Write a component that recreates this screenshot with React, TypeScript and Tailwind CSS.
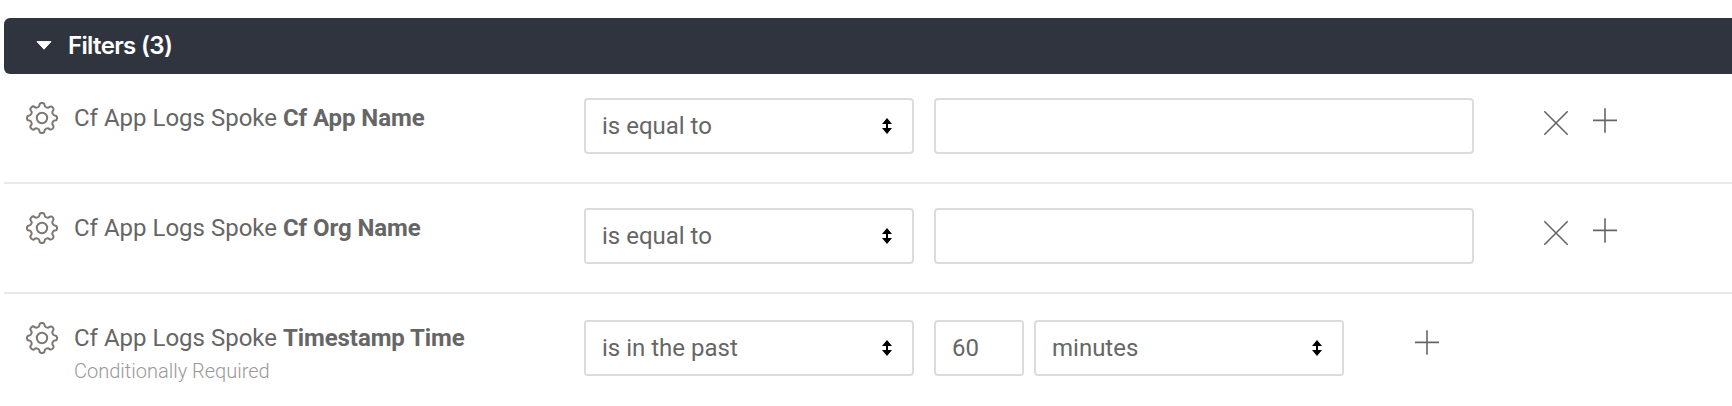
import type { ReactNode } from 'react';

function gearPath(): string {
  const point = (deg: number, r: number) => {
    const a = (deg * Math.PI) / 180;
    return `${(16 + r * Math.sin(a)).toFixed(2)} ${(16 - r * Math.cos(a)).toFixed(2)}`;
  };
  let d = `M${point(-11.25, 13.2)}`;
  for (let i = 0; i < 8; i++) {
    const t = i * 45;
    d += `A2.55 2.1 ${t} 0 1 ${point(t + 11.25, 13.2)}`;
    d += `A2.65 1.9 ${t + 22.5} 0 0 ${point(t + 33.75, 13.2)}`;
  }
  return d + 'Z';
}

const GEAR = gearPath();

function GearIcon() {
  return (
    <svg className="block size-8 shrink-0" viewBox="0 0 32 32" fill="none" stroke="#7d7773" strokeWidth="2">
      <path d={GEAR} strokeLinejoin="round" />
      <circle cx="16" cy="16" r="5.2" />
    </svg>
  );
}

function UpDown() {
  return (
    <svg className="block h-4 w-2.5" viewBox="0 0 10 16">
      <path d="M5 0L10 6H6V10H10L5 16L0 10H4V6H0Z" fill="#000" />
    </svg>
  );
}

function CloseIcon() {
  return (
    <svg className="block size-6" viewBox="0 0 24 24" stroke="#666" strokeWidth="1.6" strokeLinecap="round">
      <path d="M0.8 0.8L23.2 23.2M23.2 0.8L0.8 23.2" />
    </svg>
  );
}

function PlusIcon() {
  return (
    <svg className="block h-[25px] w-6" viewBox="0 0 24 25" stroke="#666" strokeWidth="1.6">
      <path d="M12 0.3V24.7M0 12.4H24" />
    </svg>
  );
}

function Select({ className, children }: { className: string; children: ReactNode }) {
  return (
    <button
      type="button"
      className={`flex h-14 items-center justify-between rounded-[4px] border-2 border-[#dcdcdc] bg-white pr-5 pl-4 text-left ${className}`}
    >
      <span>{children}</span>
      <UpDown />
    </button>
  );
}

function FieldLabel({ name, note }: { name: string; note?: string }) {
  return (
    <div className="flex w-[558px] shrink-0 pt-7">
      <GearIcon />
      <div className="pl-4">
        <div className="leading-8">
          Cf App Logs Spoke <span className="font-bold tracking-[-0.08px]">{name}</span>
        </div>
        {note && <div className="pt-px text-xl leading-8 font-light text-[#999]">{note}</div>}
      </div>
    </div>
  );
}

function TextFilter({ name }: { name: string }) {
  return (
    <div className="flex h-[110px] items-start border-b-2 border-[#e9e9e9] pl-[22px]">
      <FieldLabel name={name} />
      <div className="flex gap-5 pt-6">
        <Select className="w-[330px]">is equal to</Select>
        <input className="h-14 w-[540px] rounded-[4px] border-2 border-[#dcdcdc] px-4" />
      </div>
      <div className="flex gap-[25px] pt-[34px] pl-[70px]">
        <button type="button" aria-label="Remove" className="pt-[3px]">
          <CloseIcon />
        </button>
        <button type="button" aria-label="Add" className="self-start">
          <PlusIcon />
        </button>
      </div>
    </div>
  );
}

export default function App() {
  return (
    <div className="h-[406px] overflow-hidden bg-white pt-[18px] pl-1 font-['Roboto',sans-serif] text-2xl text-[#666]">
      <header className="flex h-14 items-center rounded-l-[6px] bg-[#30343f] pl-8 text-white">
        <svg className="mb-0.5 block h-[9px] w-4" viewBox="0 0 16 9">
          <path d="M1 0.6H15L8 8.2Z" fill="currentColor" stroke="currentColor" strokeLinejoin="round" />
        </svg>
        <h2 className="pl-4 font-['Inter',sans-serif] leading-8 font-semibold tracking-[-0.027em]">Filters (3)</h2>
      </header>
      <TextFilter name="Cf App Name" />
      <TextFilter name="Cf Org Name" />
      <div className="flex h-28 items-start pl-[22px]">
        <FieldLabel name="Timestamp Time" note="Conditionally Required" />
        <div className="flex pt-[26px]">
          <Select className="w-[330px]">is in the past</Select>
          <input
            className="ml-5 h-14 w-[90px] rounded-[4px] border-2 border-[#dcdcdc] px-4"
            defaultValue="60"
          />
          <Select className="ml-2.5 w-[310px]">minutes</Select>
        </div>
        <button type="button" aria-label="Add" className="pt-9 pl-[71px]">
          <PlusIcon />
        </button>
      </div>
    </div>
  );
}
